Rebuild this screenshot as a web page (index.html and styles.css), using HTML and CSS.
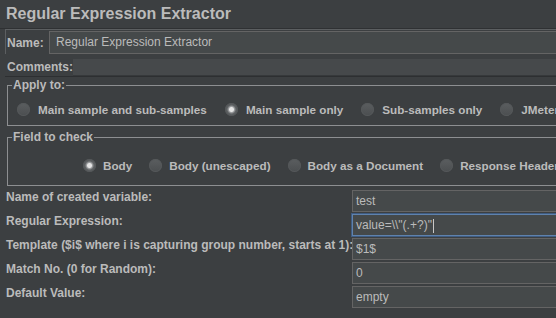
FILE: index.html
```html
<!DOCTYPE html>
<html lang="en">
<head>
    <meta charset="UTF-8">
    <meta name="viewport" content="width=device-width, initial-scale=1.0">
    <title>Regular Expression Extractor</title>
    <link rel="stylesheet" href="styles.css">
</head>
<body>
    <div class="page">
        <div class="title">Regular Expression Extractor</div>

        <!-- Name / comments panel -->
        <div class="name-panel">
            <div class="name-row">
                <span class="field-label name-label">Name:</span>
                <div class="text-input name-input">Regular Expression Extractor</div>
            </div>
            <div class="comments-row">
                <span class="field-label">Comments:</span>
                <div class="comments-input"></div>
            </div>
        </div>

        <!-- Apply to -->
        <fieldset class="group group-apply">
            <legend>Apply to:</legend>
            <div class="radio-row apply-row">
                <span class="radio"><span class="radio-dot"></span>Main sample and sub-samples</span>
                <span class="radio"><span class="radio-dot checked"></span>Main sample only</span>
                <span class="radio"><span class="radio-dot"></span>Sub-samples only</span>
                <span class="radio"><span class="radio-dot"></span>JMeter Variable</span>
            </div>
        </fieldset>

        <!-- Field to check -->
        <fieldset class="group group-field">
            <legend>Field to check</legend>
            <div class="radio-row field-row">
                <span class="radio"><span class="radio-dot checked"></span>Body</span>
                <span class="radio"><span class="radio-dot"></span>Body (unescaped)</span>
                <span class="radio"><span class="radio-dot"></span>Body as a Document</span>
                <span class="radio"><span class="radio-dot"></span>Response Headers</span>
            </div>
        </fieldset>

        <!-- Extractor settings -->
        <div class="form-grid">
            <div class="form-label">Name of created variable:</div>
            <div class="text-input">test</div>
            <div class="form-label">Regular Expression:</div>
            <div class="text-input focused">value=\\"(.+?)"<span class="caret"></span></div>
            <div class="form-label">Template ($i$ where i is capturing group number, starts at 1):</div>
            <div class="text-input">$1$</div>
            <div class="form-label">Match No. (0 for Random):</div>
            <div class="text-input">0</div>
            <div class="form-label">Default Value:</div>
            <div class="text-input">empty</div>
        </div>
    </div>
</body>
</html>
```

FILE: styles.css
```css
/* Darcula style extractor panel */
body, html {
    margin: 0;
    height: 100%;
}
body {
    background-color: #3c3f41;
    color: #bbbbbb;
    font-family: "Liberation Sans", Arial, sans-serif;
    font-size: 12px;
    overflow: hidden;
}
.page {
    width: 760px;
}
.title {
    height: 28px;
    line-height: 28px;
    padding-left: 6px;
    font-size: 16px;
    font-weight: bold;
    border-bottom: 1px solid #2f3133;
}
.field-label {
    font-weight: bold;
    white-space: nowrap;
}
.text-input {
    background-color: #45494a;
    border: 1px solid #646464;
    box-sizing: border-box;
    height: 22px;
    line-height: 20px;
    padding-left: 3px;
    white-space: nowrap;
    color: #bbbbbb;
}
.text-input.focused {
    border-color: #5f82ad;
    box-shadow: 0 0 0 1px #3f5c82;
}
.caret {
    display: inline-block;
    width: 1px;
    height: 14px;
    margin-left: 1px;
    background-color: #c8c8c8;
    vertical-align: middle;
}
/* Name panel */
.name-panel {
    margin-left: 5px;
    border-top: 1px solid #5c5f61;
    border-bottom: 1px solid #2d2f31;
}
.name-row {
    display: flex;
    align-items: center;
    border-left: 1px solid #5c5f61;
    padding: 1px 0 0 1px;
}
.name-label {
    width: 42px;
}
.name-input {
    flex: 1;
    height: 23px;
    line-height: 21px;
    padding-left: 6px;
}
.comments-row {
    display: flex;
    align-items: flex-end;
    height: 22px;
    padding-left: 2px;
    line-height: 17px;
}
.comments-input {
    flex: 1;
    height: 17px;
    background-color: #46494b;
    border-bottom: 1px solid #36393b;
    box-sizing: border-box;
}
/* Titled groups */
.group {
    margin: 1px 7px 0 7px;
    border: 1px solid #8d8f91;
    padding: 8px 0 7px 0;
    min-width: 0;
}
.group legend {
    margin-left: 4px;
    padding: 0 1px;
    font-weight: bold;
    line-height: 14px;
}
.group-field {
    margin-top: 4px;
    padding: 12px 0 11px 0;
}
.radio-row {
    display: flex;
    align-items: center;
    gap: 17px;
    height: 18px;
    font-size: 11.7px;
    font-weight: bold;
    white-space: nowrap;
}
.apply-row {
    gap: 18px;
    padding-left: 9px;
}
.field-row {
    padding-left: 75px;
}
.radio {
    display: flex;
    align-items: center;
}
.radio-dot {
    width: 13px;
    height: 13px;
    margin-right: 7px;
    border-radius: 50%;
    background: linear-gradient(#5b5e60, #4b4e50);
    box-shadow: inset 0 0 0 1px #55585a;
}
.apply-row .radio-dot {
    margin-right: 8px;
}
.radio-dot.checked {
    background: radial-gradient(circle at center, #e4e4e4 0, #e4e4e4 2px, #9c9ea0 3px, #5d6062 4.5px, #4d5052 100%);
}
/* Settings grid */
.form-grid {
    display: grid;
    grid-template-columns: 346px 1fr;
    grid-auto-rows: 22px;
    row-gap: 2px;
    margin-top: 4px;
    padding-left: 6px;
}
.form-label {
    font-weight: bold;
    line-height: 15px;
    white-space: nowrap;
}
```
